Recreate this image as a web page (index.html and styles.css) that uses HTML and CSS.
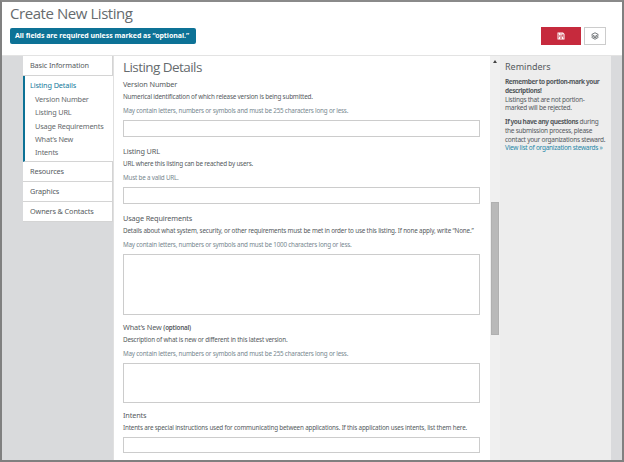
FILE: index.html
```html
<!DOCTYPE html>
<html lang="en">
<head>
<meta charset="utf-8">
<title>Create New Listing</title>
<link rel="stylesheet" href="styles.css">
</head>
<body>
<div class="app">
  <header class="header">
    <h1 class="title">Create New Listing</h1>
    <div class="toolbar">
      <div class="notice"><span>All fields are required unless marked as “optional.”</span></div>
      <div class="actions">
        <button class="btn save" aria-label="Save"><svg width="8" height="8" viewBox="0 0 16 16"><path fill="#fff" fill-rule="evenodd" d="M1 1h11l3 3v11H1zM3 3v10h10V5l-2-2v4H4V3zM7 3v2h2V3zM4 9h8v4h-2v-2H6v2H4z"/></svg></button>
        <button class="btn layers" aria-label="Preview"><svg width="8" height="8" viewBox="0 0 16 16"><path fill="none" stroke="#777b7e" stroke-width="2" d="M8 1.500l6.500 3.500L8 9 1.500 5z"/><path fill="none" stroke="#777b7e" stroke-width="2" d="M1 7.500l7 4 7-4M1 10.500l7 4 7-4"/></svg></button>
      </div>
    </div>
  </header>
  <div class="body">
    <nav class="nav">
      <a class="item">Basic Information</a>
      <div class="active">
        <a class="current">Listing Details</a>
        <a class="sub">Version Number</a>
        <a class="sub">Listing URL</a>
        <a class="sub">Usage Requirements</a>
        <a class="sub">What’s New</a>
        <a class="sub">Intents</a>
      </div>
      <a class="item">Resources</a>
      <a class="item">Graphics</a>
      <a class="item">Owners &amp; Contacts</a>
    </nav>
    <main class="main">
      <h2 class="heading">Listing Details</h2>
      <section class="field">
        <label>Version Number</label>
        <p class="desc">Numerical identification of which release version is being submitted.</p>
        <p class="hint">May contain letters, numbers or symbols and must be 255 characters long or less.</p>
        <div class="input"></div>
      </section>
      <section class="field">
        <label>Listing URL</label>
        <p class="desc">URL where this listing can be reached by users.</p>
        <p class="hint">Must be a valid URL.</p>
        <div class="input"></div>
      </section>
      <section class="field">
        <label>Usage Requirements</label>
        <p class="desc">Details about what system, security, or other requirements must be met in order to use this listing. If none apply, write “None.”</p>
        <p class="hint">May contain letters, numbers or symbols and must be 1000 characters long or less.</p>
        <div class="input tall"></div>
      </section>
      <section class="field">
        <label>What’s New <small>(optional)</small></label>
        <p class="desc">Description of what is new or different in this latest version.</p>
        <p class="hint">May contain letters, numbers or symbols and must be 255 characters long or less.</p>
        <div class="input medium"></div>
      </section>
      <section class="field">
        <label>Intents</label>
        <p class="desc">Intents are special instructions used for communicating between applications. If this application uses intents, list them here.</p>
        <div class="input short"></div>
      </section>
    </main>
    <div class="scroll"><div class="arrow"></div><div class="thumb"></div></div>
    <aside class="aside">
      <h3>Reminders</h3>
      <p><b>Remember to portion-mark your<br>descriptions!</b><br>Listings that are not portion-<br>marked will be rejected.</p>
      <p><b>If you have any questions</b> during<br>the submission process, please<br>contact your organizations steward.<br><a>View list of organization stewards »</a></p>
    </aside>
  </div>
</div>
</body>
</html>
```
FILE: styles.css
```css
* { box-sizing: border-box; margin: 0; padding: 0; }
body { width: 624px; height: 462px; overflow: hidden; font-family: "Noto Sans", "Open Sans", sans-serif; color: #555a5e; }
.app { width: 624px; height: 462px; border: 2px solid #808080; border-top-color: #8a8a8a; display: flex; flex-direction: column; background: #fff; white-space: nowrap; }
.header { height: 54px; flex: none; border-bottom: 1px solid #e3e3e3; padding: 0 16px 0 8px; }
.title { font: 400 15px/22px "Open Sans", sans-serif; letter-spacing: -0.44px; color: #666b6e; }
.toolbar { display: flex; justify-content: space-between; padding-top: 3px; }
.notice { width: 186px; height: 16px; margin-top: 1px; border-radius: 2px; background: #0d7296; color: #fff; font-size: 7px; font-weight: 700; line-height: 16px; padding-left: 5px; letter-spacing: -0.04px; }
.actions { display: flex; gap: 3px; }
.btn { height: 18px; display: flex; align-items: center; justify-content: center; border: 0; }
.save { width: 40px; background: #c62a3d; }
.layers { width: 22px; background: #fff; border: 1px solid #ccc; }
.body { flex: 1; display: flex; background: #d9dadc; min-height: 0; }
.nav { width: 90px; margin-left: 21px; font-size: 7.3px; letter-spacing: -0.12px; }
.nav a { display: block; }
.item { height: 20px; line-height: 19px; padding-left: 7px; background: #fff; border-bottom: 1px solid #d4d4d4; border-right: 1px solid #d4d4d4; }
.active { height: 86px; background: #fff; border-left: 2px solid #0d7296; border-bottom: 1px solid #d4d4d4; padding-left: 5px; }
.current { height: 17px; line-height: 19px; color: #16799b; }
.sub { height: 13.3px; line-height: 13.9px; padding-left: 5px; color: #666a6d; letter-spacing: -0.17px; }
.main { width: 377px; background: #fff; border-left: 1px solid #e0e0e0; padding: 2px 10px 0 9px; }
.heading { font: 400 13.5px/18px "Open Sans", sans-serif; letter-spacing: -0.56px; color: #666b6e; height: 20px; }
.field { margin-bottom: 8px; }
.field:has(.tall), .field:has(.medium) { margin-bottom: 6px; }
.field label { display: block; font-size: 7.3px; line-height: 12px; height: 13px; letter-spacing: -0.13px; }
small { font-size: 6.3px; font-weight: 600; letter-spacing: -0.2px; }
.desc, .hint { font-size: 6.3px; line-height: 12px; height: 12px; letter-spacing: -0.18px; }
.hint { color: #788890; margin-top: 2px; height: 15px; letter-spacing: -0.21px; }
.input { border: 1px solid #ccc; height: 17px; }
.tall { height: 61px; }
.medium { height: 40px; }
.short { height: 16px; margin-top: 3px; }
.scroll { width: 10px; background: #f0f0f0; padding: 4px 1px 0; }
.arrow { width: 4px; height: 3px; margin: 0 auto; background: #444; clip-path: polygon(50% 0, 100% 100%, 0 100%); }
.thumb { height: 133px; margin-top: 139px; background: #b9b9b9; border: 1px solid #b0b0b0; }
.aside { width: 111px; background: #ededed; padding: 3px 0 0 5px; font-size: 6.5px; line-height: 8.75px; letter-spacing: -0.26px; }
.aside h3 { font-size: 9px; font-weight: 400; line-height: 15px; margin-bottom: 4px; letter-spacing: 0; }
.aside p { margin-bottom: 5px; }
.aside b { font-weight: 700; letter-spacing: -0.4px; }
.aside a { color: #2588a8; }
```
